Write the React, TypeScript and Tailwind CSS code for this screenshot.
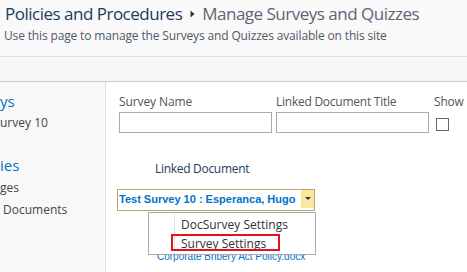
import React from "react";

export default function App() {
  const seg = { fontFamily: '"Open Sans", "Noto Sans", sans-serif' };
  const lib = { fontFamily: '"Liberation Sans", Arial, sans-serif' };
  return (
    <div className="w-[467px] h-[272px] overflow-hidden bg-white relative" style={seg}>
      <div className="h-[56px] bg-[#f9f9f9] pl-[5px] pt-[2px]">
        <div className="flex items-center h-[24px] text-[17px] leading-[24px] tracking-[-0.5px] whitespace-nowrap">
          <span className="text-[#1e3b5a]">Policies and Procedures</span>
          <svg width="5" height="8" viewBox="0 0 5 8" className="ml-[8px] mr-[7px] shrink-0">
            <path d="M0.5 0.5 L4.5 4 L0.5 7.5 Z" fill="#333" />
          </svg>
          <span className="text-[#5b6676]">Manage Surveys and Quizzes</span>
        </div>
        <div className="text-[12px] leading-[18px] text-[#4f5a68] -ml-[1px] mt-[1px] tracking-[-0.15px] whitespace-nowrap">
          Use this page to manage the Surveys and Quizzes available on this site
        </div>
      </div>
      <div className="h-[26px] bg-[#f7f7f7] border-t border-[#dedede] border-b border-b-[#c8c8c8]" />
      <div className="flex h-[190px]">
        <div className="w-[106px] shrink-0 bg-[#f8f8f8] border-r border-[#e1e1e1] pt-[9px]">
          <div className="text-[15px] leading-[20px] text-[#0072c6]">ys</div>
          <div className="text-[12px] leading-[18px] text-[#444] mt-[3px]">urvey 10</div>
          <div className="text-[15px] leading-[20px] text-[#0072c6] mt-[23px]">ies</div>
          <div className="text-[12px] leading-[18px] text-[#444] mt-[4px]">ges</div>
          <div className="text-[12px] leading-[18px] text-[#444] mt-[4px] pl-[3px]">Documents</div>
        </div>
        <div className="flex-1 pl-[13px] pt-[12px] min-w-0">
          <div className="flex">
            <div className="w-[153px] mr-[4px] shrink-0">
              <div className="text-[12px] leading-[16px] text-[#555] mb-[2px] tracking-[-0.1px]">Survey Name</div>
              <div className="h-[21px] border border-[#ababab] bg-white" />
            </div>
            <div className="w-[153px] mr-[5px] shrink-0">
              <div className="text-[12px] leading-[16px] text-[#555] mb-[2px] whitespace-nowrap tracking-[-0.25px]">Linked Document Title</div>
              <div className="h-[21px] border border-[#ababab] bg-white" />
            </div>
            <div className="min-w-0 overflow-hidden">
              <div className="text-[12px] leading-[16px] text-[#555] mb-[8px] whitespace-nowrap tracking-[-0.2px]">Show ...</div>
              <div className="w-[13px] h-[13px] ml-[2px] border border-[#666] bg-white" />
            </div>
          </div>
          <div className="ml-[36px] mt-[28px] text-[12px] leading-[16px] text-[#1e3b5a] tracking-[-0.3px]">Linked Document</div>
          <div className="-ml-[2px] mt-[12px] w-[198px] h-[22px] border border-[#b9a26d] flex items-start pl-[1px]">
            <span
              className="flex-1 min-w-0 overflow-hidden text-[11px] leading-[19px] font-bold text-[#0072c6] whitespace-nowrap"
              style={lib}
            >
              Test Survey 10 : Esperanca, Hugo
            </span>
            <div className="shrink-0 w-[13px] h-[18px] bg-[#fde79b] flex items-center justify-center">
              <svg width="6" height="4" viewBox="0 0 6 4">
                <path d="M0 0 H6 L3 3 Z" fill="#1e3b5a" />
              </svg>
            </div>
          </div>
          <div className="ml-[38px] mt-[39px] text-[10px] leading-[14px] text-[#0072c6] whitespace-nowrap" style={lib}>
            Corporate Bribery Act Policy.docx
          </div>
        </div>
      </div>
      <div className="absolute left-[148px] top-[212px] w-[168px] h-[43px] bg-white border border-[#a7abb0] flex">
        <div className="w-[26px] border-r border-[#e3e3e3]" />
        <div className="flex-1 pt-[2px] pl-[6px] text-[12px] leading-[19px] text-[#333] whitespace-nowrap">
          <div>DocSurvey Settings</div>
          <div>Survey Settings</div>
        </div>
      </div>
      <div className="absolute left-[171px] top-[234px] w-[109px] h-[17px] border-2 border-[#e3111f]" />
    </div>
  );
}
